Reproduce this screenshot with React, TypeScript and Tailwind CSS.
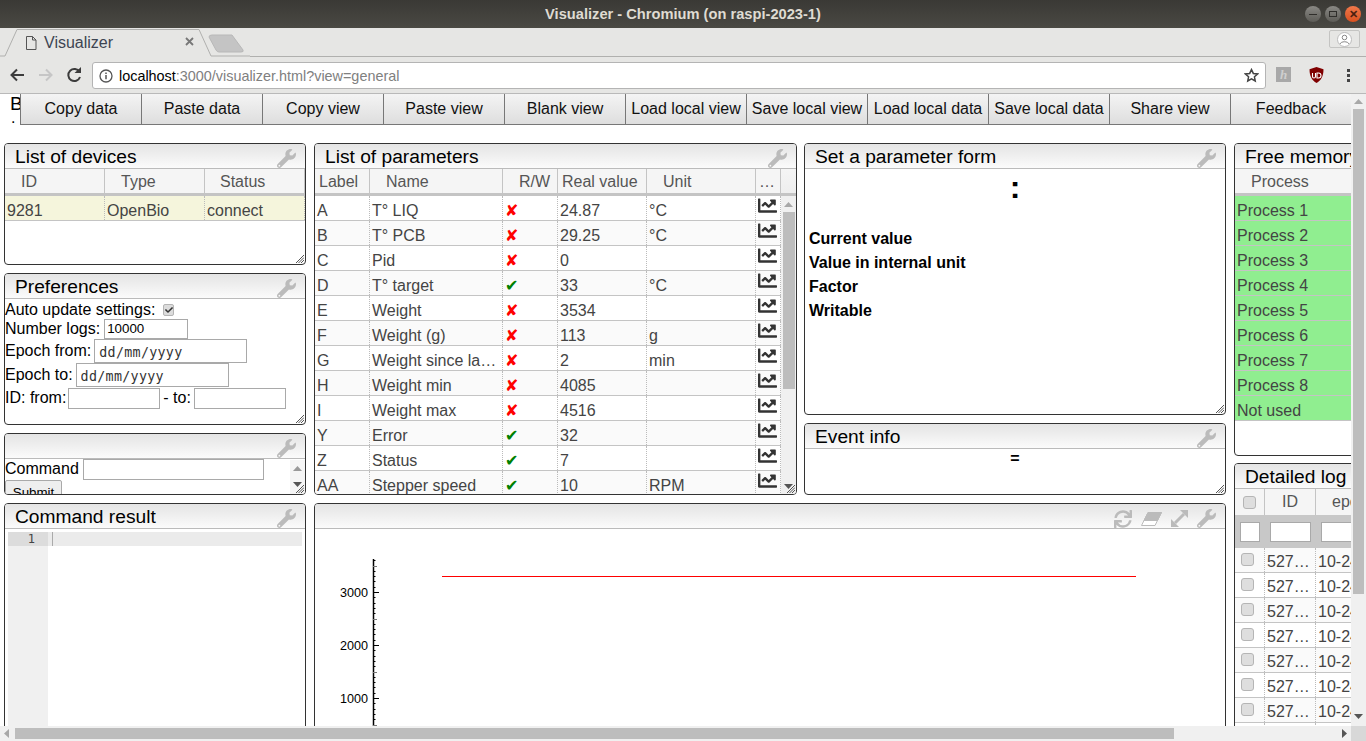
import React from "react";
import { FaWrench, FaChartLine, FaSync, FaCheck } from "react-icons/fa";

const Wrench = () => <FaWrench className="text-[#bbbbbb] w-[19px] h-[19px]" />;

const Eraser = () => (
  <svg width="21" height="14" viewBox="0 0 21 14">
    <path d="M7 .5H20.5L14 13.5H.5Z" fill="#ffffff" stroke="#bbbbbb" />
    <path d="M7 .5H20.5L16.5 8.5H3Z" fill="#bbbbbb" stroke="#bbbbbb" />
  </svg>
);

const Expand = () => (
  <svg width="17" height="17" viewBox="0 0 17 17">
    <path d="M4 13L13 4" stroke="#bbbbbb" strokeWidth="3" />
    <path d="M9 0H17V8Z" fill="#bbbbbb" />
    <path d="M0 9V17H8Z" fill="#bbbbbb" />
  </svg>
);

const Resizer = () => (
  <svg className="absolute right-[1px] bottom-[1px]" width="8" height="8" viewBox="0 0 8 8">
    <path d="M8 0L0 8M8 2.5L2.5 8M8 5L5 8" stroke="#555" strokeWidth="1" />
  </svg>
);

function Panel({ pos, title, icons, children }: { pos: string; title?: string; icons?: React.ReactNode; children?: React.ReactNode }) {
  return (
    <div className={`absolute ${pos} bg-white border border-[#333333] rounded-[4px] overflow-hidden`}>
      <div className="h-[25px] border-b border-[#bbbbbb] bg-gradient-to-b from-[#e4e4e4] to-[#fbfbfb] flex items-center pl-[10px] pr-[9px] pt-[2px] text-[19.2px] text-black">
        <span className="flex-1 whitespace-nowrap">{title}</span>
        <span className="flex gap-[9px] items-center pt-[3px]">{icons ?? <Wrench />}</span>
      </div>
      {children}
      <Resizer />
    </div>
  );
}

const HCell = ({ w, pad, children }: { w: string; pad: string; children?: React.ReactNode }) => (
  <div className={`${w} ${pad} shrink-0 h-full border-r border-[#c4c4c4] bg-[#f5f5f5] text-[#555555] whitespace-nowrap overflow-hidden flex items-center pt-[2px]`}>
    {children}
  </div>
);

const Cell = ({ w, children, cls }: { w: string; children?: React.ReactNode; cls?: string }) => (
  <div className={`${w} ${cls ?? ""} shrink-0 h-full border-r border-dotted border-[#bbbbbb] pl-[2px] pt-[6px] whitespace-nowrap overflow-hidden text-ellipsis text-[#444444]`}>
    {children}
  </div>
);

const params: [string, string, boolean, string, string][] = [
  ["A", "T° LIQ", false, "24.87", "°C"],
  ["B", "T° PCB", false, "29.25", "°C"],
  ["C", "Pid", false, "0", ""],
  ["D", "T° target", true, "33", "°C"],
  ["E", "Weight", false, "3534", ""],
  ["F", "Weight (g)", false, "113", "g"],
  ["G", "Weight since last event", false, "2", "min"],
  ["H", "Weight min", false, "4085", ""],
  ["I", "Weight max", false, "4516", ""],
  ["Y", "Error", true, "32", ""],
  ["Z", "Status", true, "7", ""],
  ["AA", "Stepper speed", true, "10", "RPM"],
];

const processes = ["Process 1", "Process 2", "Process 3", "Process 4", "Process 5", "Process 6", "Process 7", "Process 8", "Not used"];

const Arrow = ({ dir, cls }: { dir: "up" | "down" | "left" | "right"; cls: string }) => {
  const d = { up: "M0 5L4.5 0L9 5Z", down: "M0 0L9 0L4.5 5Z", left: "M5 0L5 9L0 4.5Z", right: "M0 0L5 4.5L0 9Z" }[dir];
  return (
    <svg className={`absolute ${cls}`} width="9" height="9" viewBox="0 0 9 9">
      <path d={d} fill="currentColor" />
    </svg>
  );
};

const Box = ({ cls }: { cls: string }) => (
  <span className={`block w-[13px] h-[13px] rounded-[3px] border border-[#b5b5b5] bg-[#dedede] ${cls}`} />
);

function Plot() {
  const ticks: React.ReactNode[] = [];
  for (let i = -6; i < 32; i++) {
    const y = Math.round(63 + i * 5.3) + 0.5;
    const major = (i + 60) % 10 === 0;
    const mid = (i + 60) % 10 === 5;
    ticks.push(
      <line key={i} x1="58" x2={major ? 64 : mid ? 62 : 60.5} y1={y} y2={y} stroke={mid ? "#777777" : "#000000"} />
    );
  }
  return (
    <svg className="absolute left-0 top-[25px]" width="910" height="200" viewBox="0 0 910 200">
      <line x1="58.5" x2="58.5" y1="30" y2="200" stroke="#000000" strokeWidth="1.5" />
      {ticks}
      <line x1="127" x2="821" y1="47.5" y2="47.5" stroke="#ff0000" strokeWidth="1" />
      <g fontFamily="Liberation Sans" fontSize="12.6" fill="#000000" textAnchor="end">
        <text x="53" y="68">3000</text>
        <text x="53" y="121">2000</text>
        <text x="53" y="174">1000</text>
      </g>
    </svg>
  );
}

export default function App() {
  const tb = ["Copy data", "Paste data", "Copy view", "Paste view", "Blank view", "Load local view", "Save local view", "Load local data", "Save local data", "Share view", "Feedback"];
  return (
    <div className="w-[1366px] h-[741px] overflow-hidden flex flex-col bg-white font-['Liberation_Sans',Arial,sans-serif] text-[16px] leading-[18px] relative">
      {/* title bar */}
      <div className="h-[28px] shrink-0 bg-gradient-to-b from-[#3a3935] to-[#4a4943] flex items-center justify-center text-[#dfdbd2] font-bold text-[14.67px] relative">
        Visualizer - Chromium (on raspi-2023-1)
        <div className="absolute right-[5px] top-[6px] flex gap-[4px]">
          <span className="w-[16px] h-[16px] rounded-full bg-gradient-to-b from-[#8a8985] to-[#5d5c57] flex items-center justify-center">
            <span className="w-[8px] h-[1px] bg-[#2f2e2b]" />
          </span>
          <span className="w-[16px] h-[16px] rounded-full bg-gradient-to-b from-[#8a8985] to-[#5d5c57] flex items-center justify-center">
            <span className="w-[8px] h-[6px] border border-[#2f2e2b]" />
          </span>
          <span className="w-[16px] h-[16px] rounded-full bg-gradient-to-b from-[#f0784a] to-[#d9501e] flex items-center justify-center text-[#4a2010] text-[11px] font-bold">✕</span>
        </div>
      </div>
      {/* tab strip */}
      <div className="h-[29px] shrink-0 bg-[#e6e6e4] relative">
        <svg className="absolute left-0 top-0" width="250" height="29" viewBox="0 0 250 29">
          <path d="M0 28H5L17 1.5H199L211 28H250" fill="none" stroke="#b0b0ae" />
          <path d="M209 9Q209 7 212 7H232L243 22Q244 24 241 24H219Q217 24 216 22Z" fill="#c4c4c4" stroke="#b8b8b8" />
          <path d="M186 10l7 7M193 10l-7 7" stroke="#777" strokeWidth="1.8" />
          <path d="M26.5 8.5h6l3.5 3.5v9.5h-9.5zM32.5 8.5v3.5h3.5" fill="none" stroke="#555" />
        </svg>
        <div className="absolute left-[250px] right-0 bottom-0 h-[1px] bg-[#b0b0ae]" />
        <span className="absolute left-[44px] top-[6px] text-[16px] text-[#3d4552]">Visualizer</span>
        <div className="absolute left-[1329px] top-[2px] w-[31px] h-[18px] border border-[#c4c4c2] rounded-[2px] flex items-center justify-center">
          <svg width="15" height="15" viewBox="0 0 15 15">
            <circle cx="7.5" cy="7.5" r="7" fill="#fff" stroke="#bbb" />
            <circle cx="7.5" cy="5.5" r="2.3" fill="none" stroke="#888" />
            <path d="M3 12c1-3 8-3 9 0" fill="none" stroke="#888" />
          </svg>
        </div>
      </div>
      {/* url bar */}
      <div className="h-[37px] shrink-0 bg-[#e6e6e4] relative flex items-center border-b border-[#b9b9b9]">
        <svg className="absolute left-[10px] top-[10px]" width="76" height="16" viewBox="0 0 76 16">
          <path d="M14 8H2M7 2.5L1.5 8L7 13.5" fill="none" stroke="#3c3c3c" strokeWidth="2" />
          <path d="M29 8H41M36 2.5L41.5 8L36 13.5" fill="none" stroke="#c6c6c6" strokeWidth="2" />
          <path d="M69.5 5A6 6 0 1 0 70 10" fill="none" stroke="#3c3c3c" strokeWidth="2" />
          <path d="M64.5 6H71V0Z" fill="#3c3c3c" />
        </svg>
        <div className="absolute left-[92px] top-[5px] w-[1174px] h-[27px] bg-white border border-[#b4b4b4] rounded-[3px] flex items-center">
          <svg className="ml-[6px]" width="14" height="14" viewBox="0 0 14 14">
            <circle cx="7" cy="7" r="6" fill="none" stroke="#555" strokeWidth="1.3" />
            <path d="M7 6v4.2M7 3.5v1.4" stroke="#555" strokeWidth="1.5" />
          </svg>
          <span className="ml-[6px] text-[14.4px] text-[#808080] whitespace-nowrap"><span className="text-black">localhost</span>:3000/visualizer.html?view=general</span>
          <svg className="absolute right-[6px] top-[5px]" width="15" height="15" viewBox="0 0 24 24">
            <path d="M12 2.5l2.9 6.2 6.8.8-5 4.6 1.3 6.7-6-3.3-6 3.3 1.3-6.7-5-4.6 6.8-.8z" fill="none" stroke="#444" strokeWidth="2.4" />
          </svg>
        </div>
        <div className="absolute left-[1276px] top-[10px] w-[15px] h-[15px] bg-[#a8a8a8] flex items-center justify-center text-[13px] italic font-bold text-[#cfcfcf] font-['Liberation_Serif',serif]">h</div>
        <svg className="absolute left-[1309px] top-[10px]" width="15" height="16" viewBox="0 0 15 16">
          <path d="M7.5 0L14.5 2.2C14.5 9 12 13.5 7.5 16C3 13.5.5 9 .5 2.2Z" fill="#800000" />
          <path d="M3.5 6v3.5a1.5 1.5 0 0 0 3 0V6M8 6v5h1.5a2.5 2.5 0 0 0 0-5Z" fill="none" stroke="#fff" strokeWidth="1.1" />
        </svg>
        <div className="absolute left-[1347px] top-[12px] flex flex-col gap-[2px]">
          <span className="w-[3px] h-[3px] bg-[#444]" />
          <span className="w-[3px] h-[3px] bg-[#444]" />
          <span className="w-[3px] h-[3px] bg-[#444]" />
        </div>
      </div>

      {/* page */}
      <div className="relative flex-1 overflow-hidden">
        <span className="absolute left-[10px] top-[1px] text-[19.2px] text-black">B</span>
        <span className="absolute left-[11px] top-[15px] text-[16px] text-black">.</span>
        <div className="absolute left-[20px] top-[0px] w-[1331px] h-[31px] flex border-b border-[#777777]">
          {tb.map((t, i) => (
            <div key={t} className={`w-[121px] h-full flex items-center justify-center text-[16px] text-[#111111] whitespace-nowrap bg-gradient-to-b from-[#f4f4f4] to-[#dedede] border-l border-[#777777] ${i === 10 ? "border-r-0" : ""}`}>{t}</div>
          ))}
        </div>

        {/* List of devices */}
        <Panel pos="left-[4px] top-[49px] w-[302px] h-[122px]" title="List of devices">
          <div className="flex h-[27px] border-b-[3px] border-[#c4c4c4]">
            <HCell w="w-[100px]" pad="pl-[16px]">ID</HCell>
            <HCell w="w-[100px]" pad="pl-[16px]">Type</HCell>
            <HCell w="w-[100px]" pad="pl-[15px]">Status</HCell>
          </div>
          <div className="flex h-[25px] bg-[#f5f5dc] border-b border-[#c4c4c4]">
            <Cell w="w-[100px]">9281</Cell>
            <Cell w="w-[100px]">OpenBio</Cell>
            <Cell w="w-[100px]">connect</Cell>
          </div>
        </Panel>

        {/* Preferences */}
        <Panel pos="left-[4px] top-[179px] w-[302px] h-[152px]" title="Preferences">
          <div className="text-black whitespace-nowrap">
            <div className="h-[19px] flex items-center pt-[3px]">
              Auto update settings:
              <span className="ml-[8px] w-[11px] h-[12px] rounded-[2px] bg-[#dcdcdc] border border-[#b5b5b5] flex items-center justify-center">
                <FaCheck className="w-[8px] h-[8px] text-[#333]" />
              </span>
            </div>
            <div className="h-[21px] flex items-center">
              Number logs:
              <input readOnly value="10000" className="ml-[4px] w-[84px] h-[20px] border border-[#a9a9a9] px-[2px] text-[13.33px] text-black font-['Liberation_Sans',sans-serif] outline-none" />
            </div>
            <div className="h-[24px] flex items-center">
              Epoch from:
              <input readOnly value="dd/mm/yyyy" className="ml-[3px] w-[153px] h-[24px] border border-[#a9a9a9] pl-[4px] pt-[2px] text-[13.33px] tracking-[0.3px] text-[#333333] font-['DejaVu_Sans_Mono',monospace] outline-none" />
            </div>
            <div className="h-[24px] flex items-center">
              Epoch to:
              <input readOnly value="dd/mm/yyyy" className="ml-[3px] w-[153px] h-[24px] border border-[#a9a9a9] pl-[4px] pt-[2px] text-[13.33px] tracking-[0.3px] text-[#333333] font-['DejaVu_Sans_Mono',monospace] outline-none" />
            </div>
            <div className="h-[22px] flex items-center">
              ID: from:
              <input readOnly className="ml-[2px] w-[92px] h-[21px] border border-[#a9a9a9] outline-none" />
              <span className="ml-[3px]">- to:</span>
              <input readOnly className="ml-[3px] w-[92px] h-[21px] border border-[#a9a9a9] outline-none" />
            </div>
          </div>
        </Panel>

        {/* Command */}
        <Panel pos="left-[4px] top-[339px] w-[302px] h-[62px]">
          <div className="text-black relative">
            <div className="h-[21px] flex items-center">
              <span className="pb-[2px]">Command</span>
              <input readOnly className="ml-[4px] w-[181px] h-[21px] border border-[#a9a9a9] outline-none" />
            </div>
            <div className="w-[57px] h-[22px] border border-[#a9a9a9] rounded-[2px] bg-[#eeeeee] text-[13.33px] text-center pt-[3px]">Submit</div>
          </div>
          <div className="absolute right-0 top-[26px] bottom-0 w-[15px] bg-[#f5f5f5] text-[#999999]">
            <Arrow dir="up" cls="left-[3px] top-[6px]" />
            <Arrow dir="down" cls="left-[3px] bottom-[3px] text-[#555555]" />
          </div>
        </Panel>

        {/* Command result */}
        <Panel pos="left-[4px] top-[409px] w-[302px] h-[300px]" title="Command result">
          <div className="flex h-full ml-[3px] pt-[3px]">
            <div className="w-[40px] h-full bg-[#f0f0f0]">
              <div className="h-[14px] bg-[#dcdcdc] text-right pr-[13px] text-[12px] leading-[14px] text-[#444] font-['DejaVu_Sans_Mono',monospace]">1</div>
            </div>
            <div className="w-[254px] h-[14px] bg-[#ebebeb] pl-[4px]">
              <div className="w-[1px] h-[14px] bg-[#aaaaaa]" />
            </div>
          </div>
        </Panel>

        {/* List of parameters */}
        <Panel pos="left-[314px] top-[49px] w-[483px] h-[352px]" title="List of parameters">
          <div className="flex h-[27px] border-b-[3px] border-[#c4c4c4]">
            <HCell w="w-[55px]" pad="pl-[4px]">Label</HCell>
            <HCell w="w-[133px]" pad="pl-[16px]">Name</HCell>
            <HCell w="w-[55px]" pad="pl-[16px]">R/W</HCell>
            <HCell w="w-[89px]" pad="pl-[4px]">Real value</HCell>
            <HCell w="w-[109px]" pad="pl-[16px]">Unit</HCell>
            <HCell w="w-[25px]" pad="pl-[3px]">…</HCell>
            <div className="flex-1 h-full bg-gradient-to-b from-[#f5f5f5] to-[#eeeeee]" />
          </div>
          <div className="relative">
            {params.map(([l, n, w, v, u], i) => (
              <div key={l} className={`flex h-[25px] w-[466px] border-b border-[#c4c4c4] ${i % 2 ? "bg-[#fafafa]" : "bg-white"}`}>
                <Cell w="w-[55px]">{l}</Cell>
                <Cell w="w-[133px]" cls="pr-[2px]">{n}</Cell>
                <Cell w="w-[55px]" cls="font-['DejaVu_Sans',sans-serif]">
                  <span className={w ? "text-[#008000]" : "text-[#ff0000]"}>{w ? "✔" : "✘"}</span>
                </Cell>
                <Cell w="w-[89px]">{v}</Cell>
                <Cell w="w-[109px]">{u}</Cell>
                <div className="w-[25px] shrink-0 h-full border-r border-dotted border-[#bbbbbb] pl-[2px]">
                  <FaChartLine className="w-[19px] h-[19px] text-[#333333]" />
                </div>
              </div>
            ))}
            <div className="absolute left-[466px] top-0 w-[15px] h-[298px] bg-[#f0f0f0] text-[#a8a8a8]">
              <Arrow dir="up" cls="left-[3px] top-[6px]" />
              <div className="absolute left-[2px] top-[16px] w-[12px] h-[177px] bg-[#bdbdbd]" />
              <Arrow dir="down" cls="left-[3px] bottom-[1px] text-[#555555]" />
            </div>
          </div>
        </Panel>

        {/* Set a parameter form */}
        <Panel pos="left-[804px] top-[49px] w-[422px] h-[272px]" title="Set a parameter form">
          <div className="text-center font-bold text-[32px] leading-[37px] text-black h-[58px]">:</div>
          <div className="pl-[4px] font-bold text-black leading-[24px]">
            <div>Current value</div>
            <div>Value in internal unit</div>
            <div>Factor</div>
            <div>Writable</div>
          </div>
        </Panel>

        {/* Event info */}
        <Panel pos="left-[804px] top-[329px] w-[422px] h-[72px]" title="Event info">
          <div className="text-center font-bold text-black pt-[1px]">=</div>
        </Panel>

        {/* Plot */}
        <Panel
          pos="left-[314px] top-[409px] w-[912px] h-[300px]"
          icons={
            <>
              <FaSync className="w-[18px] h-[18px] text-[#bbbbbb]" />
              <Eraser />
              <Expand />
              <Wrench />
            </>
          }
        >
          <Plot />
        </Panel>

        {/* Free memory */}
        <Panel pos="left-[1234px] top-[49px] w-[160px] h-[313px]" title="Free memory">
          <div className="flex h-[27px] border-b-[3px] border-[#c4c4c4] bg-[#f5f5f5]">
            <div className="pl-[16px] pt-[2px] text-[#555555] flex items-center">Process</div>
          </div>
          {processes.map((p) => (
            <div key={p} className="h-[25px] bg-[#90ee90] border-b border-[#c4c4c4] pl-[2px] pt-[6px] text-[#444444]">{p}</div>
          ))}
        </Panel>

        {/* Detailed log */}
        <Panel pos="left-[1234px] top-[369px] w-[160px] h-[300px]" title="Detailed log">
          <div className="flex h-[26px] bg-[#f5f5f5]">
            <div className="w-[30px] shrink-0 border-r border-[#c4c4c4] h-full flex items-center justify-center"><Box cls="" /></div>
            <div className="w-[51px] shrink-0 border-r border-[#c4c4c4] h-full text-center text-[#555555] pt-[4px]">ID</div>
            <div className="flex-1 pl-[16px] text-[#555555] pt-[4px]">epoch</div>
          </div>
          <div className="flex h-[33px] bg-[#c8c8c8] items-center">
            <div className="w-[30px] shrink-0 flex justify-center"><span className="block w-[20px] h-[20px] bg-white border border-[#a9a9a9]" /></div>
            <div className="w-[51px] shrink-0 flex justify-center"><span className="block w-[41px] h-[20px] bg-white border border-[#a9a9a9]" /></div>
            <div className="pl-[5px]"><span className="block w-[60px] h-[20px] bg-white border border-[#a9a9a9]" /></div>
          </div>
          {[0, 1, 2, 3, 4, 5, 6, 7].map((i) => (
            <div key={i} className={`flex h-[25px] border-b border-[#c4c4c4] ${i % 2 ? "bg-white" : "bg-[#fafafa]"}`}>
              <div className="w-[30px] shrink-0 h-full border-r border-dotted border-[#bbbbbb] pl-[6px] pt-[5px]"><Box cls="" /></div>
              <div className="w-[51px] shrink-0 h-full border-r border-dotted border-[#bbbbbb] pl-[2px] pt-[5px] text-[#444444]">527…</div>
              <div className="pl-[2px] pt-[5px] text-[#444444] whitespace-nowrap">10-24</div>
            </div>
          ))}
        </Panel>

        {/* page vertical scrollbar */}
        <div className="absolute right-0 top-0 bottom-[15px] w-[15px] bg-[#f0f0f0] text-[#a8a8a8]">
          <Arrow dir="up" cls="left-[3px] top-[5px]" />
          <div className="absolute left-[2px] top-[15px] w-[11px] h-[485px] bg-[#bdbdbd]" />
          <Arrow dir="down" cls="left-[3px] bottom-[3px] text-[#555555]" />
        </div>
        {/* page horizontal scrollbar */}
        <div className="absolute left-0 right-0 bottom-0 h-[15px] bg-[#f0f0f0] text-[#a8a8a8]">
          <Arrow dir="left" cls="left-[4px] top-[3px]" />
          <div className="absolute left-[15px] top-[2px] w-[1159px] h-[11px] bg-[#bdbdbd]" />
          <Arrow dir="right" cls="left-[1342px] top-[3px] text-[#555555]" />
          <div className="absolute right-0 top-0 w-[15px] h-[15px] bg-[#d8d8d8]" />
        </div>
      </div>
    </div>
  );
}
